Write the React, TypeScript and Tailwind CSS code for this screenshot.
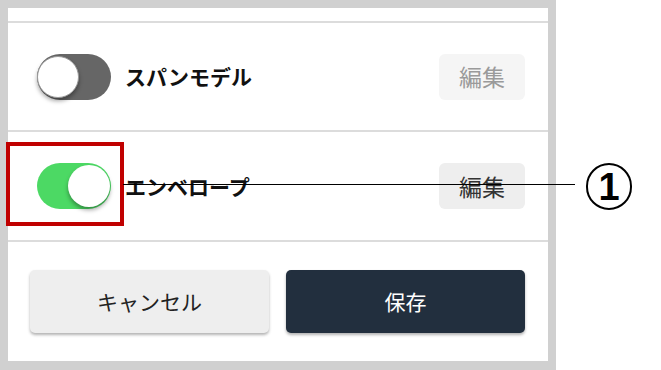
import React from 'react';

const jp = { fontFamily: '"Noto Sans CJK JP", "Noto Sans", sans-serif' };

const Toggle = ({ on }: { on: boolean }) => (
  <div
    className={
      'relative w-[74px] h-[46px] rounded-full shrink-0 ' +
      (on ? 'bg-[#4cd964]' : 'bg-[#666666]')
    }
  >
    <div
      className={
        'absolute top-[2px] w-[42px] h-[42px] rounded-full bg-white shadow-[0_3px_4px_rgba(0,0,0,0.35)] ' +
        (on ? 'right-[1px]' : 'left-0 border border-[#9a9a9a]')
      }
    />
  </div>
);

const SettingRow = ({
  label,
  on,
  height,
}: {
  label: string;
  on: boolean;
  height: string;
}) => (
  <div className={'flex items-center pl-[29px] pr-[23px] ' + height}>
    <Toggle on={on} />
    <span className="ml-[14px] text-[21px] font-bold text-[#111] leading-none" style={jp}>
      {label}
    </span>
    <button
      className={
        'ml-auto w-[86px] h-[46px] rounded-[6px] text-[23px] leading-none ' +
        (on ? 'bg-[#eeeeee] text-[#333]' : 'bg-[#f5f5f5] text-[#9a9a9a]')
      }
      style={jp}
    >
      編集
    </button>
  </div>
);

const App = () => {
  return (
    <div className="relative w-[661px] h-[370px] bg-white overflow-hidden">
      <div className="w-[556px] h-[370px] border-8 border-b-[9px] border-[#d0d0d0] bg-white flex flex-col">
        <div className="h-[13px]" />
        <div className="h-[2px] bg-[#dcdcdc]" />
        <SettingRow label="スパンモデル" on={false} height="h-[107px]" />
        <div className="h-[2px] bg-[#dcdcdc]" />
        <SettingRow label="エンベロープ" on={true} height="h-[108px]" />
        <div className="h-[2px] bg-[#dcdcdc]" />
        <div className="flex gap-[17px] pl-[22px] pr-[23px] pt-[28px]">
          <button
            className="flex-1 h-[63px] rounded-[5px] bg-[#eeeeee] text-[21px] text-[#222] shadow-[0_2px_3px_rgba(0,0,0,0.3)]"
            style={jp}
          >
            キャンセル
          </button>
          <button
            className="flex-1 h-[63px] rounded-[5px] bg-[#222f3e] text-[21px] text-white shadow-[0_2px_3px_rgba(0,0,0,0.3)]"
            style={jp}
          >
            保存
          </button>
        </div>
      </div>

      {/* annotation */}
      <div className="absolute left-[6px] top-[142px] w-[118px] h-[84px] border-4 border-[#c00000]" />
      <div className="absolute left-[123px] top-[184px] w-[452px] h-px bg-black" />
      <div
        className="absolute left-[586px] top-[163px] w-[46px] h-[47px] rounded-full border-2 border-black flex items-center justify-center text-[38px] font-bold text-black leading-none"
        style={{ fontFamily: '"Liberation Sans", Arial, sans-serif' }}
      >
        1
      </div>
    </div>
  );
};

export default App;
